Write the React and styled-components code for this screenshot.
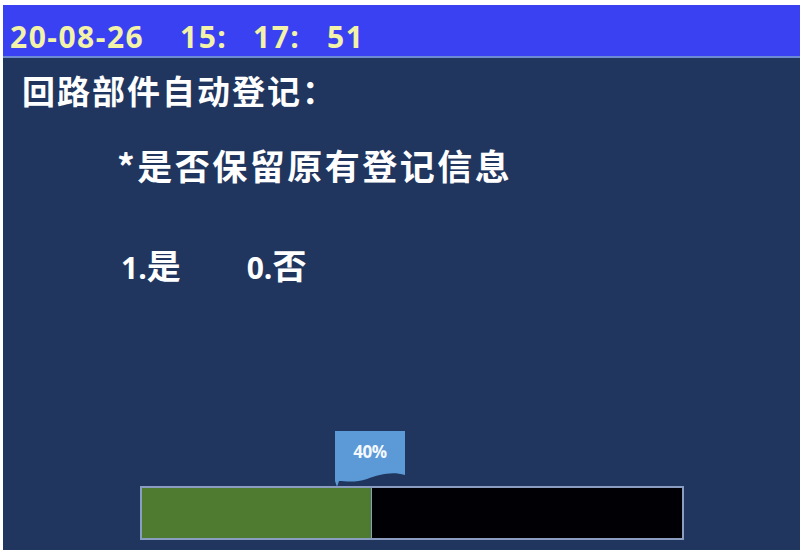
import React from 'react';
import styled, { createGlobalStyle } from 'styled-components';

const GlobalStyle = createGlobalStyle`
  html, body {
    margin: 0;
    padding: 0;
    background: #ffffff;
  }
  body {
    font-family: "Noto Sans", "Noto Sans CJK SC", sans-serif;
  }
`;

const Screen = styled.div`
  width: 797px;
  height: 545px;
  margin: 5px 0 0 3px;
  background: #20365f;
  display: flex;
  flex-direction: column;
  overflow: hidden;
`;

const Header = styled.div`
  height: 53px;
  box-sizing: border-box;
  background: #3a41f2;
  border-bottom: 2px solid #6d8bd2;
  display: flex;
  align-items: center;
  padding-left: 7px;
`;

const Clock = styled.div`
  color: #f2f2a8;
  font-family: "Open Sans", sans-serif;
  font-weight: 700;
  font-size: 30px;
  letter-spacing: 1.5px;
  display: flex;
  padding-top: 12px;
`;

const ClockPart = styled.span`
  display: inline-block;
  width: ${(p) => p.w}px;
`;

const Body = styled.div`
  flex: 1;
  display: flex;
  flex-direction: column;
  color: #ffffff;
  font-family: "Noto Sans CJK SC", sans-serif;
  font-weight: 700;
`;

const Title = styled.div`
  font-size: 33px;
  letter-spacing: 2px;
  margin: 12px 0 0 19px;
  line-height: 40px;
`;

const Question = styled.div`
  font-size: 35px;
  margin: 33px 0 0 114px;
  line-height: 44px;
  letter-spacing: 2.5px;
`;

const Options = styled.div`
  display: flex;
  gap: 66px;
  font-size: 34px;
  margin: 56px 0 0 118px;
  line-height: 44px;
`;

const OptionNum = styled.span`
  font-family: "Open Sans", sans-serif;
  font-weight: 700;
  font-size: 30px;
`;

const ProgressArea = styled.div`
  margin: auto 0 0 137px;
  padding-bottom: 10px;
  display: flex;
  flex-direction: column;
`;

const TagRow = styled.div`
  height: 55px;
  position: relative;
`;

const Tag = styled.div`
  position: absolute;
  left: ${(p) => p.left}px;
  top: 0;
  width: 70px;
  height: 56px;
`;

const TagText = styled.span`
  position: absolute;
  left: 0;
  right: 0;
  top: 9px;
  text-align: center;
  color: #f4f8ff;
  font-family: "Open Sans", sans-serif;
  font-weight: 700;
  font-size: 17px;
  letter-spacing: -0.5px;
`;

const Track = styled.div`
  width: 544px;
  height: 54px;
  box-sizing: border-box;
  border: 2px solid #8a9cbf;
  background: #000005;
  display: flex;
`;

const Fill = styled.div`
  background: #4f7b30;
  border-right: 1px solid #8a9cbf;
  height: 100%;
`;

const progress = 40;
const fillWidth = 229;

export default function App() {
  return (
    <>
      <GlobalStyle />
      <Screen>
        <Header>
          <Clock>
            <ClockPart w={170}>20-08-26</ClockPart>
            <ClockPart w={73}>15:</ClockPart>
            <ClockPart w={74}>17:</ClockPart>
            <ClockPart w={50}>51</ClockPart>
          </Clock>
        </Header>
        <Body>
          <Title>回路部件自动登记：</Title>
          <Question>*是否保留原有登记信息</Question>
          <Options>
            <span>
              <OptionNum>1.</OptionNum>是
            </span>
            <span>
              <OptionNum>0.</OptionNum>否
            </span>
          </Options>
          <ProgressArea>
            <TagRow>
              <Tag left={195}>
                <svg width="70" height="56" viewBox="0 0 70 56">
                  <path
                    d="M0 0 H70 V44 C56 40 44 44 32 48 C20 52 10 50 4 50 L2 56 L0 50 Z"
                    fill="#5b9ad6"
                  />
                </svg>
                <TagText>{progress}%</TagText>
              </Tag>
            </TagRow>
            <Track>
              <Fill style={{ width: fillWidth }} />
            </Track>
          </ProgressArea>
        </Body>
      </Screen>
    </>
  );
}
